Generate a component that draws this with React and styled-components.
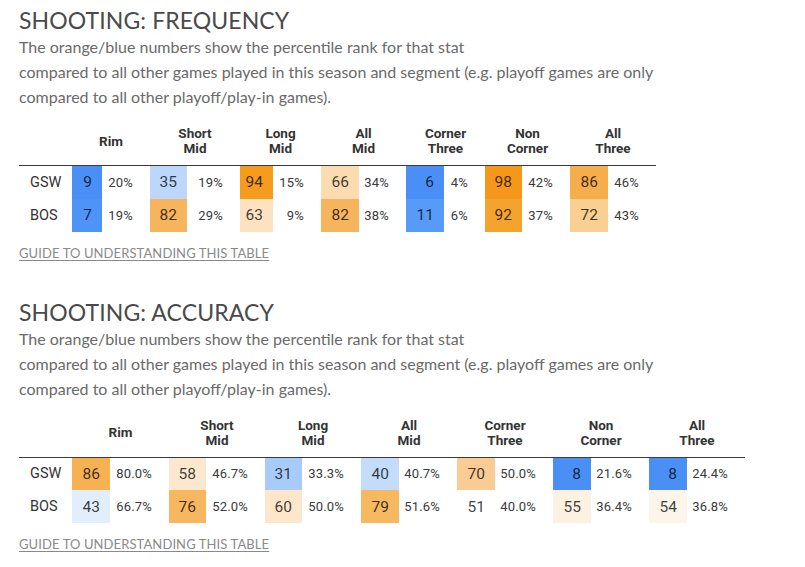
import React from "react";
import styled, { createGlobalStyle } from "styled-components";

const GlobalStyle = createGlobalStyle`
  body {
    margin: 0;
    background: #ffffff;
  }
`;

const headers = [
  ["Rim"],
  ["Short", "Mid"],
  ["Long", "Mid"],
  ["All", "Mid"],
  ["Corner", "Three"],
  ["Non", "Corner"],
  ["All", "Three"],
];

const sections = [
  {
    title: "SHOOTING: FREQUENCY",
    widths: [53, [30, 48], [37, 53], [33, 48], [38, 47], [38, 41], [37, 48], [38, 48]],
    rows: [
      {
        team: "GSW",
        cells: [
          [9, "20%", "#4a8ff5"],
          [35, "19%", "#bcd7fb"],
          [94, "15%", "#f59c1f"],
          [66, "34%", "#fbdcb1"],
          [6, "4%", "#4a8ff5"],
          [98, "42%", "#f5971a"],
          [86, "46%", "#f6ae4c"],
        ],
      },
      {
        team: "BOS",
        cells: [
          [7, "19%", "#4e93f7"],
          [82, "29%", "#f6b45c"],
          [63, "9%", "#fce2c0"],
          [82, "38%", "#f6b45c"],
          [11, "6%", "#569bf8"],
          [92, "37%", "#f5a32f"],
          [72, "43%", "#f9cf92"],
        ],
      },
    ],
  },
  {
    title: "SHOOTING: ACCURACY",
    widths: [53, [38, 59], [37, 59], [37, 59], [38, 58], [38, 58], [38, 58], [38, 58]],
    rows: [
      {
        team: "GSW",
        cells: [
          [86, "80.0%", "#f6b152"],
          [58, "46.7%", "#fde8cf"],
          [31, "33.3%", "#a9cbf9"],
          [40, "40.7%", "#c4dcfb"],
          [70, "50.0%", "#f8cc94"],
          [8, "21.6%", "#4a8ff5"],
          [8, "24.4%", "#4a8ff5"],
        ],
      },
      {
        team: "BOS",
        cells: [
          [43, "66.7%", "#e3eefd"],
          [76, "52.0%", "#f7b760"],
          [60, "50.0%", "#fde6ca"],
          [79, "51.6%", "#f6b860"],
          [51, "40.0%", "#ffffff"],
          [55, "36.4%", "#fdf1e2"],
          [54, "36.8%", "#fdf5ea"],
        ],
      },
    ],
  },
];

const Page = styled.div`
  padding: 6px 0 0 19px;
  font-family: Lato, "Liberation Sans", sans-serif;
`;

const Section = styled.section`
  margin-bottom: 37px;
`;

const Title = styled.h2`
  margin: 0;
  font-family: Lato, "Liberation Sans", sans-serif;
  font-weight: 400;
  font-size: 23px;
  line-height: 28px;
  color: #4a4a4a;
  letter-spacing: 0.1px;
`;

const Intro = styled.p`
  margin: 0;
  font-size: 16px;
  line-height: 25px;
  color: #6a6a6a;
`;

const Table = styled.table`
  margin-top: 17px;
  border-collapse: collapse;
  table-layout: fixed;
  font-family: Roboto, "Liberation Sans", sans-serif;
  color: #333333;
`;

const HeadCell = styled.th`
  padding: 0 0 9px;
  font-size: 13.5px;
  font-weight: 700;
  line-height: 15px;
  text-align: center;
  vertical-align: middle;
  color: #333333;
  border-bottom: 1.5px solid #3a3a3a;
`;

const HeadLine = styled.span`
  display: block;
`;

const Row = styled.tr`
  height: 33px;
`;

const TeamCell = styled.td`
  padding: 0 0 0 11px;
  font-size: 14.5px;
  color: #333333;
`;

const RankCell = styled.td`
  padding: 0 10px 0 0;
  text-align: right;
  font-size: 15.5px;
  color: rgba(0, 0, 0, 0.76);
  background: ${(p) => p.$bg};
`;

const PctCell = styled.td`
  padding: 0 17px 0 0;
  text-align: right;
  font-size: 13px;
  letter-spacing: 0.2px;
  color: #3a3a3a;
`;

const Guide = styled.a`
  display: inline-block;
  margin-top: 13px;
  font-family: Lato, "Liberation Sans", sans-serif;
  font-size: 13px;
  color: #8a8a8a;
  text-decoration: underline;
  text-underline-offset: 2px;
  letter-spacing: 0.1px;
`;

function StatTable({ widths, rows }) {
  const [labelWidth, ...groups] = widths;
  return (
    <Table>
      <colgroup>
        <col style={{ width: labelWidth }} />
        {groups.map(([box, pct], i) => (
          <React.Fragment key={i}>
            <col style={{ width: box }} />
            <col style={{ width: pct }} />
          </React.Fragment>
        ))}
      </colgroup>
      <thead>
        <tr>
          <HeadCell />
          {headers.map((lines, i) => (
            <HeadCell key={i} colSpan={2}>
              {lines.map((l) => (
                <HeadLine key={l}>{l}</HeadLine>
              ))}
            </HeadCell>
          ))}
        </tr>
      </thead>
      <tbody>
        {rows.map((row) => (
          <Row key={row.team}>
            <TeamCell>{row.team}</TeamCell>
            {row.cells.map(([rank, pct, bg], i) => (
              <React.Fragment key={i}>
                <RankCell $bg={bg}>{rank}</RankCell>
                <PctCell>{pct}</PctCell>
              </React.Fragment>
            ))}
          </Row>
        ))}
      </tbody>
    </Table>
  );
}

export default function App() {
  return (
    <>
      <GlobalStyle />
      <Page>
        {sections.map((s) => (
          <Section key={s.title}>
            <Title>{s.title}</Title>
            <Intro>
              The orange/blue numbers show the percentile rank for that stat
              <br />
              compared to all other games played in this season and segment (e.g. playoff games are only
              <br />
              compared to all other playoff/play-in games).
            </Intro>
            <StatTable widths={s.widths} rows={s.rows} />
            <div>
              <Guide href="#">GUIDE TO UNDERSTANDING THIS TABLE</Guide>
            </div>
          </Section>
        ))}
      </Page>
    </>
  );
}
